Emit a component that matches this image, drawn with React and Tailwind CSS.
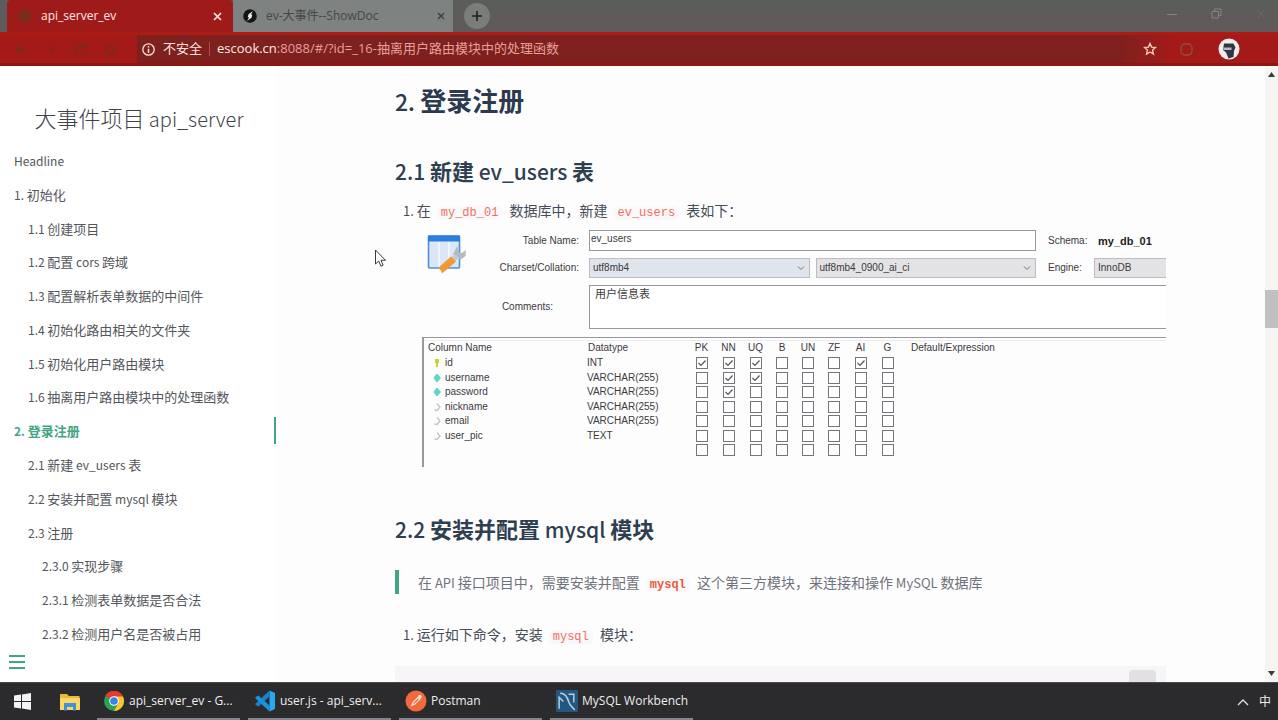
import React from "react";

const CJK = "font-['Noto_Sans_CJK_SC',sans-serif]";
const UI = "font-['Open_Sans','Noto_Sans_CJK_SC',sans-serif]";

// Latin runs are set a little smaller than the Chinese text around them.
function Mixed({ text, latin }) {
  return text
    .split(/([\x20-\x7e]+)/)
    .filter(Boolean)
    .map((part, i) =>
      /^[\x20-\x7e]+$/.test(part) ? (
        <span key={i} className={`leading-none whitespace-pre ${latin}`}>{part}</span>
      ) : (
        <React.Fragment key={i}>{part}</React.Fragment>
      )
    );
}

const NAV = [
  { text: "Headline", level: 0 },
  { text: "1. 初始化", level: 0 },
  { text: "1.1 创建项目", level: 1 },
  { text: "1.2 配置 cors 跨域", level: 1 },
  { text: "1.3 配置解析表单数据的中间件", level: 1 },
  { text: "1.4 初始化路由相关的文件夹", level: 1 },
  { text: "1.5 初始化用户路由模块", level: 1 },
  { text: "1.6 抽离用户路由模块中的处理函数", level: 1 },
  { text: "2. 登录注册", level: 0, active: true },
  { text: "2.1 新建 ev_users 表", level: 1 },
  { text: "2.2 安装并配置 mysql 模块", level: 1 },
  { text: "2.3 注册", level: 1 },
  { text: "2.3.0 实现步骤", level: 2 },
  { text: "2.3.1 检测表单数据是否合法", level: 2 },
  { text: "2.3.2 检测用户名是否被占用", level: 2 },
];
const INDENT = ["pl-[14px]", "pl-[28px]", "pl-[42px]"];

const FLAGS = ["PK", "NN", "UQ", "B", "UN", "ZF", "AI", "G"];
const ROWS = [
  { name: "id", type: "INT", on: ["PK", "NN", "UQ", "AI"], mark: "key" },
  { name: "username", type: "VARCHAR(255)", on: ["NN", "UQ"], mark: "fill" },
  { name: "password", type: "VARCHAR(255)", on: ["NN"], mark: "fill" },
  { name: "nickname", type: "VARCHAR(255)", on: [], mark: "open" },
  { name: "email", type: "VARCHAR(255)", on: [], mark: "open" },
  { name: "user_pic", type: "TEXT", on: [], mark: "open" },
  { name: "", type: "", on: [], mark: null },
];

function Mark({ kind }) {
  if (!kind) return null;
  return (
    <svg width="8" height="10" viewBox="0 0 8 10" aria-hidden="true">
      {kind === "key" && <path d="M2 1h4v4H5v4H3V5H2z" fill="#c9d42a" />}
      {kind === "fill" && <path d="M4 1l3.500 4L4 9 .8 5z" fill="#62d6c4" stroke="#62d6c4" />}
      {kind === "open" && <path d="M4 1.500L7 5 4 8.500 1.500 8" fill="none" stroke="#bfc3c9" strokeWidth="1.300" />}
    </svg>
  );
}

function Code({ children, strong }) {
  return (
    <code className={`mr-[4px] ml-[6px] rounded-sm bg-[#faf8fa] px-[4px] font-['Liberation_Mono',monospace] text-[12px] leading-none ${strong ? "font-bold text-[#ee5a3c]" : "text-[#f0705c]"}`}>
      {children}
    </code>
  );
}

function Tick() {
  return (
    <svg className="pointer-events-none col-start-1 row-start-1" width="12" height="12" viewBox="0 0 12 12" aria-hidden="true">
      <path d="M2.500 6l2.500 2.500L9.500 3.500" fill="none" stroke="#55525a" strokeWidth="1.200" />
    </svg>
  );
}

function Drop({ id, value, className }) {
  return (
    <div className={`grid h-[20px] items-center border border-[#bcbcc2] ${className}`}>
      <select id={id} aria-label={value} className="col-start-1 row-start-1 h-full w-full appearance-none bg-transparent pl-[3px] text-[10px] leading-[16px] text-[#3c3a40] outline-none">
        <option>{value}</option>
      </select>
      <svg className="pointer-events-none col-start-1 row-start-1 mr-[4px] justify-self-end" width="8" height="6" viewBox="0 0 8 6" aria-hidden="true">
        <path d="M1 1.500l3 3 3-3" fill="none" stroke="#77757b" />
      </svg>
    </div>
  );
}

function Browser() {
  return (
    <header className={`shrink-0 text-[12px] ${UI}`}>
      <div className="flex h-[32px] items-stretch bg-linear-to-b from-[#5a5d5b] to-[#605a59]">
        <div className="ml-[7px] flex w-[226px] items-center gap-[9px] rounded-t-sm bg-[#9f1b1a] px-[11px]">
          <svg width="14" height="14" viewBox="0 0 14 14" className="shrink-0" aria-hidden="true">
            <path d="M7 1.500l5 2.700v5.600l-5 2.700-5-2.700V4.200z" fill="#7c2a1c" stroke="#61401f" />
          </svg>
          <span className="flex-1 text-[#ffe9e6]">api_server_ev</span>
          <button aria-label="关闭标签页" className="text-[#ffe4e0]">
            <svg width="9" height="9" viewBox="0 0 9 9"><path d="M1 1l7 7M8 1L1 8" stroke="currentColor" strokeWidth="1.700" /></svg>
          </button>
        </div>
        <div className="flex w-[220px] items-center gap-[9px] bg-[#7e8280] pr-[8px] pl-[10px]">
          <svg width="14" height="14" viewBox="0 0 14 14" className="shrink-0" aria-hidden="true">
            <circle cx="7" cy="7" r="6.800" fill="#141414" />
            <path d="M10 2L5.500 5.200 4.800 8l1.200.5L4 12l4.500-3.200.8-3L8 5.500z" fill="#e9ecea" />
          </svg>
          <span className="flex-1 text-[#454846]">ev-大事件--ShowDoc</span>
          <button aria-label="关闭标签页" className="text-[#3a3d3b]">
            <svg width="8" height="8" viewBox="0 0 8 8"><path d="M1 1l6 6M7 1L1 7" stroke="currentColor" strokeWidth="1.400" /></svg>
          </button>
        </div>
        <button aria-label="新标签页" className="ml-[11px] grid size-[26px] place-items-center self-center rounded-full bg-[#7b7d7b] text-[#1f201f]">
          <svg width="12" height="12" viewBox="0 0 12 12"><path d="M6 1v10M1 6h10" stroke="currentColor" strokeWidth="1.600" /></svg>
        </button>
        <div className="mr-[12px] ml-auto flex items-center gap-[34px] text-[#858383]">
          <button aria-label="最小化"><svg width="10" height="10" viewBox="0 0 10 10"><path d="M0 3.500h10" stroke="currentColor" /></svg></button>
          <button aria-label="还原" className="pb-[5px]"><svg width="11" height="11" viewBox="0 0 11 11"><path d="M1 3.500h6.500V10H1zM3.500 3V1H10v6.500H8" fill="none" stroke="currentColor" /></svg></button>
          <button aria-label="关闭" className="pb-[5px] text-[#6b6766]"><svg width="10" height="10" viewBox="0 0 10 10"><path d="M1 1l8 8M9 1L1 9" stroke="currentColor" /></svg></button>
        </div>
      </div>
      <div className="flex h-[34px] items-center border-t-3 border-b-3 border-t-[#ac1c14] border-b-[#8b1715] bg-[#a31a18]">
        <div className="flex w-[137px] items-center gap-[18px] pl-[14px] text-[#713018]">
          <button aria-label="后退"><svg width="12" height="12" viewBox="0 0 12 12"><path d="M11 6H2M6 2L2 6l4 4" fill="none" stroke="currentColor" strokeWidth="1.500" /></svg></button>
          <button aria-label="前进" className="text-[#8f2018]"><svg width="12" height="12" viewBox="0 0 12 12"><path d="M1 6h9M6 2l4 4-4 4" fill="none" stroke="currentColor" strokeWidth="1.500" /></svg></button>
          <button aria-label="刷新"><svg width="12" height="12" viewBox="0 0 12 12"><path d="M10 3.500A4.700 4.700 0 1 0 10.700 7M10.500 1v3h-3" fill="none" stroke="currentColor" strokeWidth="1.400" /></svg></button>
          <button aria-label="主页"><svg width="12" height="12" viewBox="0 0 12 12"><path d="M.8 6.200L6 1.500l5.200 4.700M2.500 5.500V11h7V5.500" fill="none" stroke="currentColor" strokeWidth="1.400" /></svg></button>
        </div>
        <div className="flex flex-1 items-center self-stretch bg-linear-to-r from-[#7e201e] from-95% to-[#a31a18] pl-[5px] text-[13px] text-[#e5a09a]">
          <svg width="13" height="13" viewBox="0 0 13 13" className="mr-[8px] text-[#fbe2de]" aria-hidden="true">
            <circle cx="6.500" cy="6.500" r="5.700" fill="none" stroke="currentColor" strokeWidth="1.300" />
            <path d="M6.500 3v1.500M6.500 5.700V10" stroke="currentColor" strokeWidth="1.500" />
          </svg>
          <span className="text-[#fbe2de]">不安全</span>
          <span className="mx-[7px] h-[14px] w-px bg-[#a9504c]" />
          <span className="whitespace-nowrap"><span className="text-[#ffece8]">escook.cn</span>:8088/#/?id=_16-抽离用户路由模块中的处理函数</span>
          <button aria-label="收藏" className="mr-[14px] ml-auto text-[#f0cdb9]">
            <svg width="14" height="14" viewBox="0 0 14 14"><path d="M7 1.500l1.600 3.600 3.900.4-2.900 2.600.8 3.900L7 10l-3.400 2 .8-3.900-2.900-2.600 3.900-.4z" fill="none" stroke="currentColor" strokeWidth="1.400" /></svg>
          </button>
        </div>
        <div className="flex items-center gap-[24px] pr-[38px] pl-[8px]">
          <button aria-label="扩展程序" className="text-[#8a5240]"><svg width="15" height="15" viewBox="0 0 15 15"><rect x="2" y="2" width="11" height="11" rx="4" fill="none" stroke="currentColor" strokeWidth="1.400" /></svg></button>
          <button aria-label="用户">
            <svg width="22" height="22" viewBox="0 0 22 22">
              <circle cx="11" cy="11" r="10.500" fill="#f2eeee" />
              <path d="M6 5.500h9.500l2 4-1.500 3.500-.5 6-5 1.500-2.500-6L5 12z" fill="#333640" />
              <path d="M5.500 9.500h8v2.500h-8z" fill="#b9bac4" />
            </svg>
          </button>
        </div>
      </div>
    </header>
  );
}

function Sidebar() {
  return (
    <aside className={`flex w-[276px] shrink-0 flex-col bg-white text-[#53565c] ${CJK}`}>
      <h1 className="pt-[35px] pb-[14px] pl-[2px] text-center text-[22px] leading-[32px] font-light text-[#3f4349]">
        <Mixed text="大事件项目 api_server" latin="text-[20px]" />
      </h1>
      <nav className="flex min-h-0 flex-1 flex-col pb-[8px]">
        <ul className="flex flex-1 flex-col justify-between text-[13px] leading-[27px]">
          {NAV.map((n) => (
            <li key={n.text} className={`h-[27px] ${INDENT[n.level]} ${n.active ? "border-r-2 border-[#42a683] font-bold text-[#42a683]" : ""}`}>
              <a href="#" className="block"><Mixed text={n.text} latin="text-[12px]" /></a>
            </li>
          ))}
        </ul>
      </nav>
      <button aria-label="切换侧边栏" className="mb-[13px] ml-[9px] flex w-[16px] flex-col gap-[4px]">
        <span className="h-[2px] w-full bg-[#42a683]" />
        <span className="h-[2px] w-full bg-[#42a683]" />
        <span className="h-[2px] w-full bg-[#42a683]" />
      </button>
    </aside>
  );
}

function TableEditor() {
  return (
    <figure className="mt-[8px] ml-[27px] font-['Liberation_Sans','Noto_Sans_CJK_SC',sans-serif] text-[10px] leading-[14px] text-[#3c3a40]">
      <div className="grid grid-cols-[44px_114px_1fr_58px_72px] grid-rows-[21px_20px_44px] items-center gap-y-[7px]">
        <svg className="row-span-2 ml-[4px]" width="42" height="42" viewBox="0 0 42 42" aria-hidden="true">
          <rect x="2.500" y="3" width="31" height="32" rx="1" fill="#dbe7f6" stroke="#4d8fdc" strokeWidth="1.600" />
          <path d="M2 2.500h32v6H2z" fill="#2d7de0" />
          <path d="M13 9v25M23 9v25" stroke="#f6faff" strokeWidth="1.500" />
          <path d="M31 13l2 6 3 1 4-3-.5 6-4.500 3.500-5-1-3-4z" fill="#b3bbc3" />
          <path d="M29 21l4 4-5 4-3.500-3.500z" fill="#c4ccd2" />
          <path d="M25 23.500l5 5L19 38l-3 2.500-1-3-3-2.500z" fill="#f09a33" />
        </svg>
        <label htmlFor="tname" className="pr-[1px] text-right">Table Name:</label>
        <input id="tname" defaultValue="ev_users" className="ml-[9px] h-[21px] border border-[#9a989f] bg-white pb-[4px] pl-[1px] outline-none" />
        <span className="pl-[12px] whitespace-nowrap">Schema:</span>
        <b className="pl-[4px] text-[11px] whitespace-nowrap text-[#222]">my_db_01</b>
        <label htmlFor="charset" className="pr-[1px] text-right">Charset/Collation:</label>
        <div className="ml-[9px] flex gap-[6px]">
          <Drop id="charset" value="utf8mb4" className="flex-1 bg-[#dfe5ec]" />
          <Drop id="collation" value="utf8mb4_0900_ai_ci" className="flex-1 bg-[#e3e2e5]" />
        </div>
        <label htmlFor="engine" className="pl-[12px]">Engine:</label>
        <select id="engine" className="h-[20px] appearance-none border border-r-0 border-[#bcbcc2] bg-[#e3e2e5] pl-[3px] text-[10px] outline-none">
          <option>InnoDB</option>
        </select>
        <label htmlFor="comments" className="col-span-2 pr-[27px] text-right">Comments:</label>
        <textarea id="comments" defaultValue="用户信息表" className="col-span-3 ml-[9px] h-[44px] resize-none border border-r-0 border-[#9a989f] bg-white px-[5px] py-[1px] text-[11px] outline-none" />
      </div>
      <div className="mt-[8px] h-[130px] border-t border-l-2 border-[#9a989f] pt-[2px]">
        <table className="w-full table-fixed border-collapse border-t border-[#eeebf0] text-left">
          <colgroup>
            <col className="w-[163px]" />
            <col className="w-[101px]" />
            {FLAGS.map((f) => <col key={f} className={f === "B" || f === "UN" || f === "ZF" ? "w-[26px]" : "w-[27px]"} />)}
            <col />
          </colgroup>
          <thead>
            <tr className="h-[15px]">
              <th className="p-0 pl-[4px] font-normal">Column Name</th>
              <th className="p-0 pl-px font-normal">Datatype</th>
              {FLAGS.map((f) => <th key={f} className="p-0 text-center font-normal">{f}</th>)}
              <th className="p-0 pl-[10px] font-normal">Default/Expression</th>
            </tr>
          </thead>
          <tbody>
            {ROWS.map((r, i) => (
              <tr key={i} className="odd:h-[15px] even:h-[14px]">
                <td className="p-0">
                  <span className="flex items-center gap-[4px] pl-[9px]"><Mark kind={r.mark} />{r.name}</span>
                </td>
                <td className="p-0">{r.type}</td>
                {FLAGS.map((f) => (
                  <td key={f} className="p-0">
                    <span className="mx-auto grid size-[12px]">
                      <input type="checkbox" aria-label={`${r.name} ${f}`} defaultChecked={r.on.includes(f)} className="col-start-1 row-start-1 size-[12px] appearance-none border border-[#77747c] bg-white" />
                      {r.on.includes(f) && <Tick />}
                    </span>
                  </td>
                ))}
                <td className="p-0" />
              </tr>
            ))}
          </tbody>
        </table>
      </div>
    </figure>
  );
}

function Article() {
  const h3 = "text-[22px] leading-[28px] font-bold text-[#2f3f52]";
  const lat3 = "text-[21px] font-medium";
  return (
    <main className={`min-w-0 flex-1 overflow-hidden bg-[#fefdfe] pt-[18px] pr-[99px] pl-[119px] text-[14px] leading-[24px] text-[#454c58] ${CJK}`}>
      <h2 className="text-[26px] leading-[32px] font-bold text-[#2c3a50]"><Mixed text="2. 登录注册" latin="text-[23px] font-medium" /></h2>
      <h3 className={`mt-[40px] ${h3}`}><Mixed text="2.1 新建 ev_users 表" latin={lat3} /></h3>
      <p className="mt-[14px] pl-[8px]">
        <Mixed text="1. 在" latin="text-[13px]" /><Code>my_db_01</Code> 数据库中，新建<Code>ev_users</Code> 表如下：
      </p>
      <TableEditor />
      <h3 className={`mt-[47px] ${h3}`}><Mixed text="2.2 安装并配置 mysql 模块" latin={lat3} /></h3>
      <blockquote className="mt-[28px] border-l-4 border-[#42a683] pl-[19px] text-[#6f727b]">
        <Mixed text="在 API 接口项目中，需要安装并配置" latin="text-[13px]" /><Code strong>mysql</Code> <Mixed text="这个第三方模块，来连接和操作 MySQL 数据库" latin="text-[13px]" />
      </blockquote>
      <p className="mt-[28px] pl-[8px]">
        <Mixed text="1. 运行如下命令，安装" latin="text-[13px]" /><Code>mysql</Code> 模块：
      </p>
      <div className="mt-[20px] flex h-[40px] items-start justify-end bg-[#f7f5f8] pr-[10px]">
        <span className="mt-[4px] h-[14px] w-[27px] rounded-sm bg-[#e2e0e3]" />
      </div>
    </main>
  );
}

function Scrollbar() {
  return (
    <div className="flex w-[13px] shrink-0 flex-col items-center bg-[#f6f5f4] py-[6px]" aria-hidden="true">
      <svg width="7" height="5" viewBox="0 0 7 5"><path d="M3.500 0L7 5H0z" fill="#3c3c3c" /></svg>
      <span className="mt-[213px] h-[38px] w-full bg-[#c1c0c0]" />
      <svg className="mt-auto" width="7" height="5" viewBox="0 0 7 5"><path d="M3.500 5L0 0h7z" fill="#3c3c3c" /></svg>
    </div>
  );
}

const ICONS = {
  chrome: (
    <svg width="22" height="22" viewBox="0 0 22 22" className="shrink-0" aria-hidden="true">
      <circle cx="11" cy="11" r="10" fill="#2ca14f" />
      <path d="M11 11L2.340 6A10 10 0 0 1 19.660 6z" fill="#e23c30" />
      <path d="M2.340 6A10 10 0 0 1 19.660 6L21 8H11z" fill="#e23c30" />
      <path d="M19.900 6.500A10 10 0 0 1 11 21l4.300-7.500L11 6.500z" fill="#f9c632" />
      <circle cx="11" cy="11" r="4.800" fill="#fff" />
      <circle cx="11" cy="11" r="3.800" fill="#3c7fe8" />
    </svg>
  ),
  code: (
    <svg width="22" height="22" viewBox="0 0 22 22" className="shrink-0" aria-hidden="true">
      <path d="M15.500.5L21 3v16l-5.500 2.500z" fill="#2aa7ee" />
      <path d="M15.500.5v6L4.500 16.500 1.500 15v-1.500z" fill="#1b7fc9" />
      <path d="M15.500 21.500v-6L4.500 5.500 1.500 7v1.500z" fill="#1a93dd" />
    </svg>
  ),
  postman: (
    <svg width="22" height="22" viewBox="0 0 23 23" className="shrink-0" aria-hidden="true">
      <circle cx="11.500" cy="11.500" r="11" fill="#f2693c" />
      <path d="M7 16l1.500-3 5-5 2 1.800-5.500 5z" fill="none" stroke="#fde3d8" strokeWidth="1.200" />
      <circle cx="15.500" cy="7" r="2" fill="#fde3d8" />
    </svg>
  ),
  mysql: (
    <svg width="22" height="22" viewBox="0 0 21 21" className="shrink-0" aria-hidden="true">
      <rect width="21" height="21" rx="1" fill="#24577f" />
      <path d="M3 18V7l4 4M4 3c5 0 7 4 8 8s3 5 6 8M12 4h5v8" fill="none" stroke="#b7cfe0" strokeWidth="1.400" />
    </svg>
  ),
};

const TASKS = [
  { icon: "chrome", text: "api_server_ev - G..." },
  { icon: "code", text: "user.js - api_serv..." },
  { icon: "postman", text: "Postman" },
  { icon: "mysql", text: "MySQL Workbench" },
];

function Taskbar() {
  return (
    <footer className={`flex h-[38px] shrink-0 items-stretch border-t border-[#4a494c] bg-[#2b2a2d] text-[12px] text-[#eeedef] ${UI}`}>
      <button aria-label="开始" className="pl-[14px]">
        <svg width="17" height="17" viewBox="0 0 17 17"><path d="M0 2.500l7-1V8H0zM8 1.400L17 0v8H8zM0 9h7v6.500l-7-1zM8 9h9v8l-9-1.400z" fill="#f4f3f5" /></svg>
      </button>
      <button aria-label="文件资源管理器" className="ml-[29px]">
        <svg width="20" height="18" viewBox="0 0 20 18">
          <path d="M0 1h7l2 2h10.500v14H0z" fill="#eab93c" />
          <path d="M0 5h20v12H0z" fill="#fbd765" />
          <path d="M4 10h12v7.500h-3V14H7v3.500H4z" fill="#3f92d8" />
        </svg>
      </button>
      <div className="ml-[17px] flex gap-[8px]">
        {TASKS.map((t) => (
          <button key={t.text} className="flex w-[143px] items-center gap-[4px] border-b-2 border-[#85848f] pl-[6px] whitespace-nowrap">
            {ICONS[t.icon]}
            {t.text}
          </button>
        ))}
      </div>
      <div className="mr-[7px] ml-auto flex items-center gap-[10px]">
        <button aria-label="显示隐藏的图标"><svg width="12" height="8" viewBox="0 0 12 8"><path d="M1 7l5-5 5 5" fill="none" stroke="#dddce0" strokeWidth="1.400" /></svg></button>
        <span>中</span>
      </div>
    </footer>
  );
}

export default function App() {
  return (
    <div className="relative flex h-screen flex-col overflow-hidden bg-white">
      <Browser />
      <div className="flex min-h-0 flex-1">
        <Sidebar />
        <Article />
        <Scrollbar />
      </div>
      <Taskbar />
      <svg className="pointer-events-none absolute top-[249px] left-[374px]" width="13" height="19" viewBox="0 0 13 19" aria-hidden="true">
        <path d="M1.500 1v14l3.200-3 2.200 5.200 2.200-1L7 11.300h4.500z" fill="#fff" stroke="#3a3a3a" />
      </svg>
    </div>
  );
}
